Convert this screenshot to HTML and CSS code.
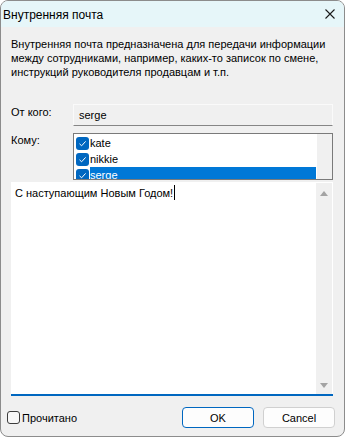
FILE: index.html
```html
<!DOCTYPE html>
<html lang="ru">
<head>
<meta charset="utf-8">
<title>Внутренняя почта</title>
<link rel="stylesheet" href="styles.css">
</head>
<body>
<div class="window">
  <div class="titlebar">
    <span class="title">Внутренняя почта</span>
    <svg class="close" width="10" height="10" viewBox="0 0 10 10"><path d="M0.5 0.5 L9.5 9.5 M9.5 0.5 L0.5 9.5" stroke="#1b1b1b" stroke-width="1.1" fill="none"/></svg>
  </div>
  <div class="content">
    <p class="desc">Внутренняя почта предназначена для передачи информации<br>между сотрудниками, например, каких-то записок по смене,<br>инструкций руководителя продавцам и т.п.</p>
    <div class="form">
      <span class="lbl lbl-from">От кого:</span>
      <div class="field">serge</div>
      <span class="lbl lbl-to">Кому:</span>
      <div class="listbox">
        <div class="items">
          <div class="item"><span class="cb"><svg width="13" height="13" viewBox="0 0 13 13"><path d="M3.5 6.8 L5.6 8.8 L9.6 4.4" stroke="#fff" stroke-width="1" fill="none"/></svg></span><span class="txt">kate</span></div>
          <div class="item"><span class="cb"><svg width="13" height="13" viewBox="0 0 13 13"><path d="M3.5 6.8 L5.6 8.8 L9.6 4.4" stroke="#fff" stroke-width="1" fill="none"/></svg></span><span class="txt">nikkie</span></div>
          <div class="item"><span class="cb"><svg width="13" height="13" viewBox="0 0 13 13"><path d="M3.5 6.8 L5.6 8.8 L9.6 4.4" stroke="#fff" stroke-width="1" fill="none"/></svg></span><span class="txt sel">serge</span></div>
        </div>
        <div class="lb-scroll"></div>
      </div>
    </div>
    <div class="memo">
      <div class="memo-text">С наступающим Новым Годом!<span class="caret"></span></div>
      <div class="vscroll">
        <svg width="16" height="8" viewBox="0 0 16 8"><path d="M4 7 L12 7 L8 2 Z" fill="#a3a3a3"/></svg>
        <svg width="16" height="8" viewBox="0 0 16 8"><path d="M4 1 L12 1 L8 6 Z" fill="#a3a3a3"/></svg>
      </div>
    </div>
  </div>
  <div class="footer">
    <label class="check"><span class="box"></span><span>Прочитано</span></label>
    <div class="buttons">
      <button class="btn btn-ok">OK</button>
      <button class="btn">Cancel</button>
    </div>
  </div>
</div>
</body>
</html>
```

FILE: styles.css
```css
* { box-sizing: border-box; }
html, body { margin: 0; padding: 0; background: #ffffff; }
body {
  font-family: "Liberation Sans", Arial, sans-serif;
  font-size: 11px;
  color: #000;
}
.window {
  width: 345px;
  height: 437px;
  border: 1px solid #8c8c8c;
  border-radius: 8px;
  background: #f0f0f0;
  overflow: hidden;
  display: flex;
  flex-direction: column;
}
.titlebar {
  height: 26px;
  background: #e6f6f9;
  display: flex;
  align-items: center;
  justify-content: space-between;
  padding: 1px 9px 0 2px;
  flex: none;
}
.title { font-size: 12px; line-height: 14px; }
.close { display: block; margin-top: -1px; }
.content {
  padding: 10px 11px 0 9px;
  flex: none;
}
.desc {
  margin: 0;
  line-height: 14px;
  height: 42px;
  padding-left: 1px;
  white-space: nowrap;
}
.form {
  margin-top: 25px;
  display: grid;
  grid-template-columns: 63px 1fr;
  row-gap: 7px;
}
.lbl { line-height: 14px; padding-left: 1px; }
.lbl-from { padding-top: 1px; }
.lbl-to { padding-top: 0; }
.field {
  height: 22px;
  border: 1px solid #fafafa;
  border-bottom-color: #868686;
  background: #f0f0f0;
  padding-left: 5px;
  line-height: 20px;
}
.listbox {
  height: 47px;
  border: 1px solid #7a7a7a;
  background: #fff;
  display: flex;
  overflow: hidden;
}
.items { flex: 1; padding-top: 1px; overflow: hidden; }
.item { height: 16px; display: flex; align-items: center; }
.cb {
  width: 13px;
  height: 13px;
  margin: 0 1px 0 2px;
  background: #0067c0;
  border-radius: 3px;
  flex: none;
}
.cb svg { display: block; }
.txt { flex: 1; height: 16px; line-height: 16px; }
.txt.sel { background: #0078d7; color: #fff; }
.lb-scroll {
  width: 16px;
  background: #f0f0f0;
  border-left: 1px solid #fff;
  flex: none;
}
.memo {
  margin: 2px 0 0 1px;
  height: 214px;
  background: #fff;
  border-bottom: 2px solid #0067c0;
  display: flex;
}
.memo-text {
  flex: 1;
  padding: 3px 4px;
  line-height: 14px;
}
.caret {
  display: inline-block;
  width: 1px;
  height: 15px;
  background: #000;
  vertical-align: -3px;
  margin-left: 1px;
}
.vscroll {
  width: 16px;
  margin: 1px 1px 0 0;
  background: #f0f0f0;
  display: flex;
  flex-direction: column;
  justify-content: space-between;
  padding: 6px 0 4px;
  flex: none;
}
.vscroll svg { display: block; }
.footer {
  padding: 11px 9px 0 6px;
  display: flex;
  align-items: center;
  justify-content: space-between;
}
.check { display: flex; align-items: center; gap: 2px; line-height: 14px; }
.box {
  width: 13px;
  height: 13px;
  border: 1px solid #3c3c3c;
  border-radius: 3px;
  background: #f7f7f7;
}
.buttons { display: flex; gap: 9px; }
.btn {
  width: 72px;
  height: 21px;
  border: 1px solid #d0d0d0;
  border-radius: 4px;
  background: #fdfdfd;
  font-family: inherit;
  font-size: 11px;
  color: #000;
  padding: 0;
}
.btn-ok { border-color: #0067c0; }
```
